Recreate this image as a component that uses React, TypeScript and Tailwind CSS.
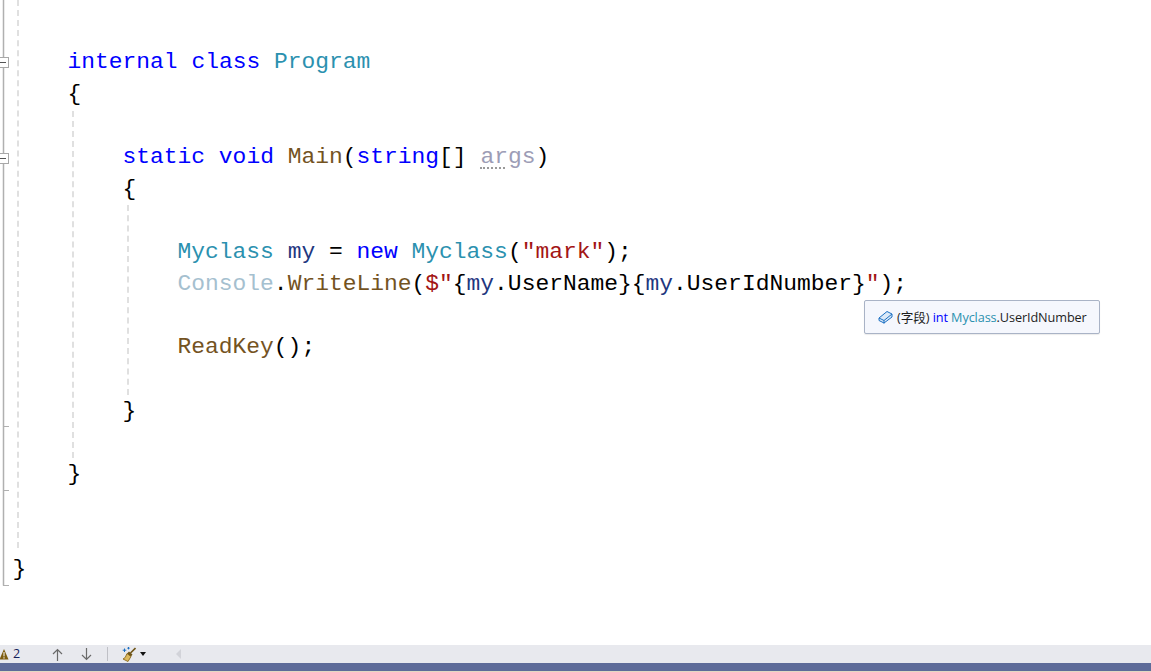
type Token = { t: string; c?: string };

const KW = "text-[#0000ff]";
const TYPE = "text-[#2b91af]";
const FN = "text-[#74531f]";
const STR = "text-[#a31515]";
const LOCAL = "text-[#1f377f]";

type Line = { indent?: number; tokens?: Token[] };

const lines: Line[] = [
  {},
  {
    indent: 1,
    tokens: [
      { t: "internal class ", c: KW },
      { t: "Program", c: TYPE },
    ],
  },
  { indent: 1, tokens: [{ t: "{" }] },
  {},
  {
    indent: 2,
    tokens: [
      { t: "static void ", c: KW },
      { t: "Main", c: FN },
      { t: "(" },
      { t: "string", c: KW },
      { t: "[] " },
      { t: "args", c: "args" },
      { t: ")" },
    ],
  },
  { indent: 2, tokens: [{ t: "{" }] },
  {},
  {
    indent: 3,
    tokens: [
      { t: "Myclass", c: TYPE },
      { t: " " },
      { t: "my", c: LOCAL },
      { t: " = " },
      { t: "new ", c: KW },
      { t: "Myclass", c: TYPE },
      { t: "(" },
      { t: '"mark"', c: STR },
      { t: ");" },
    ],
  },
  {
    indent: 3,
    tokens: [
      { t: "Console", c: "text-[#a5c0cf]" },
      { t: "." },
      { t: "WriteLine", c: FN },
      { t: "(" },
      { t: '$"', c: STR },
      { t: "{" },
      { t: "my", c: LOCAL },
      { t: ".UserName}{" },
      { t: "my", c: LOCAL },
      { t: ".UserIdNumber}" },
      { t: '"', c: STR },
      { t: ");" },
    ],
  },
  {},
  { indent: 3, tokens: [{ t: "ReadKey", c: FN }, { t: "();" }] },
  {},
  { indent: 2, tokens: [{ t: "}" }] },
  {},
  { indent: 1, tokens: [{ t: "}" }] },
  {},
  {},
  { tokens: [{ t: "}" }] },
];

const indentClass = ["ml-0", "ml-[55px]", "ml-[110px]", "ml-[165px]"];

const Outline = () => (
  <svg width="10" height="590" className="absolute top-0 left-0" fill="none">
    <path d="M3.5 0V585.5" stroke="#b0b0b0" strokeWidth="1.5" />
    <path d="M3 585.5H9M3 426.5H9M3 490.5H9" stroke="#b0b0b0" />
    <rect x="-0.5" y="57.5" width="9" height="10" fill="#fff" stroke="#a8a8a8" />
    <path d="M0 62.5H6" stroke="#555" />
    <rect x="-0.5" y="153.5" width="9" height="10" fill="#fff" stroke="#a8a8a8" />
    <path d="M0 158.5H6" stroke="#555" />
  </svg>
);

const Tooltip = () => (
  <div className="absolute top-[300px] left-[864px] w-[236px] h-[34px] flex items-center gap-[4px] pl-[13px] pt-[2px] bg-[#f5f7fd] border border-[#a9b3c6] rounded-[2px] text-[12.7px] text-[#1e1e1e] font-['Open_Sans','Noto_Sans_CJK_SC',sans-serif] shadow-[0_1px_1px_rgba(0,0,0,0.08)]">
    <svg width="15" height="15" viewBox="0 0 15 15" fill="none" className="-mt-[2px]">
      <path d="M1 8 9 1.5l5 2.5v3l-8 6-5-2.5z" fill="#dbe9f8" stroke="#1b6fc2" strokeLinejoin="round" />
      <path d="M1 8l5 2.5 8-6.5M6 10.5v3" stroke="#1b6fc2" />
    </svg>
    <span className="whitespace-pre tracking-[-0.1px]">
      (字段) <span className="text-[#0000ff]">int</span>{" "}
      <span className="text-[#2b91af]">Myclass</span>.UserIdNumber
    </span>
  </div>
);

const StatusBar = () => (
  <div className="h-[18px] bg-[#e8e9ee] flex items-center text-[12.5px] text-[#14205a] font-['Open_Sans',sans-serif]">
    <svg width="9" height="11" viewBox="0 0 9 11" className="shrink-0">
      <path d="M4 0 8.5 10.5H-0.5z" fill="#7d5d10" />
      <path d="M4 3v4.4M4 8.2v1.4" stroke="#fff" />
    </svg>
    <span className="ml-[4px] w-[8px]">2</span>
    <svg width="11" height="13" viewBox="0 0 11 13" fill="none" stroke="#6a6a6a" strokeWidth="1.2" className="ml-[31px]">
      <path d="M5.5 13V1.5M1 6 5.5 1.5 10 6" />
    </svg>
    <svg width="11" height="13" viewBox="0 0 11 13" fill="none" stroke="#6a6a6a" strokeWidth="1.2" className="ml-[18px]">
      <path d="M5.5 0V11.5M1 7 5.5 11.5 10 7" />
    </svg>
    <div className="ml-[15px] w-px h-[14px] bg-[#bfc0c6]" />
    <svg width="14" height="15" viewBox="0 0 14 15" fill="none" className="ml-[14px]">
      <path d="M8.5 6 13.5 1" stroke="#6f5518" strokeWidth="1.6" />
      <path d="M5 6.5 9 9.5 6 14.5 1 12 3.2 10.5z" fill="#dcb95e" stroke="#8a6a1e" strokeWidth="0.9" />
      <path d="M5 6.5 9 9.5 10.5 7.5 7 4.5z" fill="#6f5518" />
      <path d="M2.5 1.5v3.5M0.7 3.2h3.6M6.5 0v2.4M5.3 1.2h2.4" stroke="#1b6fc2" strokeWidth="1" />
    </svg>
    <div className="ml-[4px] w-0 h-0 border-x-[3.5px] border-x-transparent border-t-[4px] border-t-[#111]" />
    <div className="ml-[30px] w-0 h-0 border-y-[5px] border-y-transparent border-r-[5px] border-r-[#d2d3d9]" />
  </div>
);

export default function App() {
  return (
    <div className="h-screen w-full flex flex-col bg-white overflow-hidden">
      <div className="relative flex-1 pt-[15.5px] pl-[12.5px] font-['Liberation_Mono',monospace] text-[22.95px] text-black">
        <Outline />
        <div className="absolute left-[17px] top-0 h-[548px] border-l-2 border-dashed border-[#e0e0e0]" />
        <div className="absolute left-[72px] top-[111px] h-[347px] border-l-2 border-dashed border-[#e0e0e0]" />
        <div className="absolute left-[127px] top-[205px] h-[190px] border-l-2 border-dashed border-[#e0e0e0]" />
        {lines.map((line, i) => (
          <div key={i} className={`h-[31.7px] leading-[31.7px] whitespace-pre ${indentClass[line.indent ?? 0]}`}>
            {line.tokens?.map((tok, j) =>
              tok.c === "args" ? (
                <span key={j} className="relative text-[#9d9db6]">
                  {tok.t}
                  <span className="absolute left-0 bottom-[1px] w-[25px] border-t-2 border-dotted border-[#9a9a9a]" />
                </span>
              ) : (
                <span key={j} className={tok.c}>
                  {tok.t}
                </span>
              ),
            )}
          </div>
        ))}
        <Tooltip />
      </div>
      <StatusBar />
      <div className="h-[8px] bg-[#5d6b99]" />
      <div className="h-px bg-[#e3d9c2]" />
    </div>
  );
}
